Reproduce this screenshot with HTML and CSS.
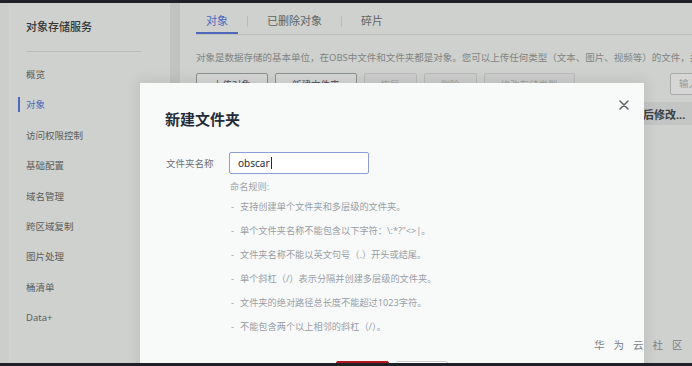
FILE: index.html
```html
<!DOCTYPE html>
<html lang="zh-CN">
<head>
<meta charset="utf-8">
<title>新建文件夹</title>
<link rel="stylesheet" href="styles.css">
</head>
<body>
<div class="frame-bar"></div>
<div class="app">
  <div class="rail"></div>
  <aside class="sidebar">
    <div class="side-title">对象存储服务</div>
    <div class="side-divider"></div>
    <ul class="menu">
      <li>概览</li>
      <li class="active">对象</li>
      <li>访问权限控制</li>
      <li>基础配置</li>
      <li>域名管理</li>
      <li>跨区域复制</li>
      <li>图片处理</li>
      <li>桶清单</li>
      <li>Data+</li>
    </ul>
  </aside>
  <div class="gutter"></div>
  <main class="main">
    <div class="tabs">
      <div class="tab active">对象</div>
      <span class="tab-sep"></span>
      <div class="tab">已删除对象</div>
      <span class="tab-sep"></span>
      <div class="tab">碎片</div>
    </div>
    <p class="desc">对象是数据存储的基本单位，在OBS中文件和文件夹都是对象。您可以上传任何类型（文本、图片、视频等）的文件，并对其进行管理。</p>
    <div class="toolbar">
      <button class="btn">上传对象</button>
      <button class="btn">新建文件夹</button>
      <button class="btn disabled">恢复</button>
      <button class="btn disabled">删除</button>
      <button class="btn disabled">修改存储类型</button>
      <div class="search">输入对象名前缀搜索</div>
    </div>
    <div class="thead">
      <span class="th th-name">名称</span>
      <span class="th th-class">存储类别</span>
      <span class="th th-size">大小</span>
      <span class="th th-time">最后修改...</span>
    </div>
  </main>

  <div class="overlay"></div>

  <div class="modal">
    <svg class="close" width="10" height="10" viewBox="0 0 10 10" aria-label="关闭">
      <path d="M1 1 L9 9 M9 1 L1 9" stroke="#5b5f66" stroke-width="1.5" stroke-linecap="round" fill="none"/>
    </svg>
    <h2 class="modal-title">新建文件夹</h2>
    <div class="form-row">
      <label class="form-label">文件夹名称</label>
      <div class="input">obscar<span class="caret"></span></div>
    </div>
    <div class="rules">
      <div class="rules-head">命名规则:</div>
      <ul class="rule-list">
        <li><span class="dash">-</span>支持创建单个文件夹和多层级的文件夹。</li>
        <li><span class="dash">-</span>单个文件夹名称不能包含以下字符：\:*?"&lt;&gt;|。</li>
        <li><span class="dash">-</span>文件夹名称不能以英文句号（.）开头或结尾。</li>
        <li><span class="dash">-</span>单个斜杠（/）表示分隔并创建多层级的文件夹。</li>
        <li><span class="dash">-</span>文件夹的绝对路径总长度不能超过1023字符。</li>
        <li><span class="dash">-</span>不能包含两个以上相邻的斜杠（/）。</li>
      </ul>
    </div>
    <div class="modal-footer">
      <button class="mbtn primary">确定</button>
      <button class="mbtn">取消</button>
    </div>
  </div>

  <div class="watermark">华为云社区</div>
</div>
<div class="frame-bar"></div>
</body>
</html>
```

FILE: styles.css
```css
* { box-sizing: border-box; }

html, body {
  margin: 0;
  padding: 0;
  width: 692px;
  height: 366px;
  overflow: hidden;
  background: #1e2127;
  font-family: "Noto Sans", "Noto Sans CJK SC", sans-serif;
}

.frame-bar {
  height: 3px;
  background: #1e2127;
}

.app {
  position: relative;
  display: flex;
  height: 360px;
  overflow: hidden;
  background: #f6f9f6;
}

.rail {
  flex: none;
  width: 10px;
  background: #f3f6f3;
  border-right: 1px solid #fbfdfb;
}

.sidebar {
  flex: none;
  width: 160px;
  padding: 14px 0 0 16px;
  background: #f6f9f6;
}

.side-title {
  font-size: 11px;
  line-height: 20px;
  font-weight: 500;
  color: #3e423e;
}

.side-divider {
  margin-top: 14px;
  width: 115px;
  height: 1px;
  background: #e0e3e0;
}

.menu {
  list-style: none;
  margin: 6.8px 0 0;
  padding: 0;
}

.menu li {
  display: flex;
  align-items: center;
  height: 30.4px;
  font-size: 9.5px;
  color: #6f736f;
}

.menu li.active {
  color: #5e7ce0;
}

.menu li.active::before {
  content: "";
  width: 2px;
  height: 15px;
  margin-left: -8px;
  margin-right: 6px;
  background: #5e7ce0;
}

.gutter {
  flex: none;
  width: 10px;
  background: #e6e9e6;
}

.main {
  flex: none;
  width: 606px;
  padding: 0 16px;
  background: #f6f9f6;
}

.tabs {
  display: flex;
  align-items: flex-start;
  padding-top: 10px;
  border-bottom: 1px solid #e2e5e2;
}

.tab {
  padding: 0 10px 3px;
  font-size: 11px;
  line-height: 16px;
  color: #737773;
  border-bottom: 2px solid transparent;
}

.tab.active {
  color: #5e7ce0;
  border-bottom-color: #5e7ce0;
}

.tab-sep {
  width: 1px;
  height: 11px;
  margin: 3px 9px 0;
  background: #dfe2df;
}

.desc {
  margin: 16px 0 0;
  font-size: 9.5px;
  line-height: 14px;
  white-space: nowrap;
  color: #9a9e9a;
}

.toolbar {
  display: flex;
  gap: 7px;
  margin-top: 8px;
}

.btn {
  height: 22px;
  padding: 0 16px;
  font: inherit;
  font-size: 9.5px;
  color: #575d6c;
  background: #ffffff;
  border: 1px solid #a9ada9;
  border-radius: 2px;
}

.btn.disabled {
  color: #c0c4c0;
  border-color: #dde0dd;
  background: #f3f5f3;
}

.search {
  margin-left: auto;
  width: 100px;
  height: 22px;
  padding: 0 8px;
  font-size: 9.5px;
  line-height: 20px;
  color: #b6b9b6;
  background: #ffffff;
  border: 1px solid #c9ccc9;
  border-radius: 2px;
  white-space: nowrap;
  overflow: hidden;
}

.thead {
  display: flex;
  align-items: center;
  margin-top: 7px;
  height: 23px;
  background: #e9ecea;
}

.th {
  font-size: 11px;
  font-weight: 700;
  color: #484c53;
  white-space: nowrap;
}

.th-name { width: 200px; padding-left: 30px; }
.th-class { width: 130px; }
.th-size { width: 106px; }
.th-time { width: 60px; }

.overlay {
  position: absolute;
  inset: 0;
  background: rgba(0, 0, 0, 0.16);
}

.modal {
  position: absolute;
  left: 140px;
  top: 80px;
  width: 504px;
  height: 320px;
  padding: 26px 25px 0;
  background: #f7faf9;
  box-shadow: 0 0 12px 3px rgba(0, 0, 0, 0.08);
}

.close {
  position: absolute;
  top: 17px;
  right: 15px;
}

.modal-title {
  margin: 0;
  font-size: 15px;
  line-height: 20px;
  font-weight: 700;
  color: #252b3a;
}

.form-row {
  display: flex;
  align-items: center;
  margin-top: 23px;
  padding-left: 1px;
}

.form-label {
  width: 63px;
  font-size: 9.5px;
  color: #6b6f78;
}

.input {
  display: flex;
  align-items: center;
  width: 140px;
  height: 22px;
  padding: 0 8px;
  font-size: 10px;
  color: #252b3a;
  background: #ffffff;
  border: 1px solid #8d9dd8;
  border-radius: 2px;
}

.caret {
  width: 1px;
  height: 12px;
  margin-left: 1px;
  background: #252b3a;
}

.rules {
  margin: 5px 0 0 65px;
}

.rules-head {
  font-size: 9.2px;
  line-height: 16px;
  color: #a2a5aa;
}

.rule-list {
  list-style: none;
  margin: 0;
  padding: 0;
}

.rule-list li {
  display: flex;
  font-size: 9.2px;
  line-height: 24px;
  color: #9a9ea6;
  white-space: nowrap;
}

.dash {
  width: 10px;
  padding-left: 1px;
}

.modal-footer {
  display: flex;
  justify-content: center;
  gap: 7px;
  margin-top: 22px;
}

.mbtn {
  width: 52px;
  height: 26px;
  font: inherit;
  font-size: 10px;
  color: #575d6c;
  background: #ffffff;
  border: 1px solid #c8cacc;
  border-radius: 2px;
}

.mbtn.primary {
  width: 53px;
  color: #ffffff;
  background: #b8141b;
  border-color: #b8141b;
}

.watermark {
  position: absolute;
  left: 594px;
  top: 334px;
  font-size: 10.5px;
  line-height: 16px;
  letter-spacing: 9px;
  color: #7c8085;
  white-space: nowrap;
}
```
